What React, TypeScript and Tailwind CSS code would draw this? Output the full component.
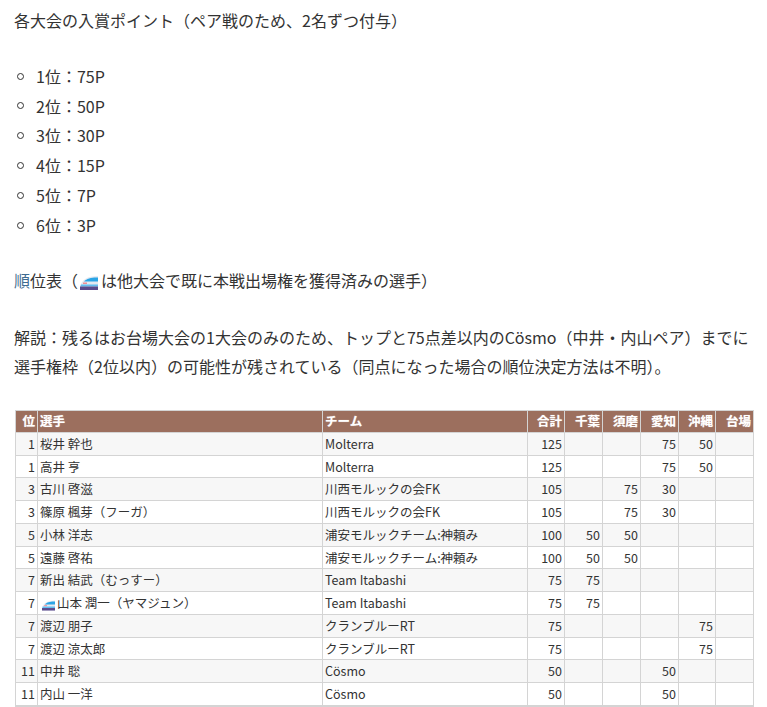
import React from 'react';

const Train = ({ className }: { className: string }) => (
  <svg viewBox="0 0 18 14" className={className}>
    <path d="M0 10 C2 4 7 0 18 0 V11 H0 Z" fill="#e4e9f1" />
    <path d="M5 4.5 C8 2 13 1.5 18 1.5 V5.5 H4 Z" fill="#2aa5e6" />
    <path d="M1 8.5 H18 V10.5 H0.5 Z" fill="#62bdf0" />
    <path d="M3 6.5 H7 V8 H3 Z" fill="#ee8f96" />
    <path d="M0 10.5 H18 V14 H0 Z" fill="#5a4a8c" />
  </svg>
);

const points = ['1位：75P', '2位：50P', '3位：30P', '4位：15P', '5位：7P', '6位：3P'];

const heads = ['合計', '千葉', '須磨', '愛知', '沖縄', '台場'];

const rows: { rank: string; name: string; train?: boolean; team: string; pts: string[] }[] = [
  { rank: '1', name: '桜井 幹也', team: 'Molterra', pts: ['125', '', '', '75', '50', ''] },
  { rank: '1', name: '高井 亨', team: 'Molterra', pts: ['125', '', '', '75', '50', ''] },
  { rank: '3', name: '古川 啓滋', team: '川西モルックの会FK', pts: ['105', '', '75', '30', '', ''] },
  { rank: '3', name: '篠原 楓芽（フーガ）', team: '川西モルックの会FK', pts: ['105', '', '75', '30', '', ''] },
  { rank: '5', name: '小林 洋志', team: '浦安モルックチーム:神頼み', pts: ['100', '50', '50', '', '', ''] },
  { rank: '5', name: '遠藤 啓祐', team: '浦安モルックチーム:神頼み', pts: ['100', '50', '50', '', '', ''] },
  { rank: '7', name: '新出 結武（むっすー）', team: 'Team Itabashi', pts: ['75', '75', '', '', '', ''] },
  { rank: '7', name: '山本 潤一（ヤマジュン）', train: true, team: 'Team Itabashi', pts: ['75', '75', '', '', '', ''] },
  { rank: '7', name: '渡辺 朋子', team: 'クランブルーRT', pts: ['75', '', '', '', '75', ''] },
  { rank: '7', name: '渡辺 涼太郎', team: 'クランブルーRT', pts: ['75', '', '', '', '75', ''] },
  { rank: '11', name: '中井 聡', team: 'Cösmo', pts: ['50', '', '', '50', '', ''] },
  { rank: '11', name: '内山 一洋', team: 'Cösmo', pts: ['50', '', '', '50', '', ''] },
  { rank: '', name: '', team: '', pts: ['', '', '', '', '', ''] },
];

export default function App() {
  return (
    <div className="h-[707px] overflow-hidden bg-white pl-[14px] pt-[6px] font-['Noto_Sans_CJK_JP',sans-serif] text-base leading-[28.8px] text-[#333]">
      <p>各大会の入賞ポイント（ペア戦のため、2名ずつ付与）</p>
      <ul className="mt-[27px] list-none">
        {points.map((p) => (
          <li key={p} className="mb-[1px] flex items-center">
            <span className="ml-[3px] mr-[12px] h-[7px] w-[7px] rounded-full border-[1.5px] border-[#333]" />
            {p}
          </li>
        ))}
      </ul>
      <p className="mt-[26px]">
        <span className="text-[#3f6c91]">順</span>位表（
        <Train className="mb-[-1px] ml-[2px] mr-[2px] inline h-[14px] w-[18px]" />
        <span className="ml-px">は他大会で既に本戦出場権を獲得済みの選手）</span>
      </p>
      <p className="mt-[29px] w-[738px]">
        解説：残るはお台場大会の1大会のみのため、トップと75点差以内のCösmo（中井・内山ペア）までに選手権枠（2位以内）の可能性が残されている（同点になった場合の順位決定方法は不明）。
      </p>
      <table className="ml-px mt-[29.5px] w-[739px] table-fixed border-collapse text-[12.5px] leading-[21.76px]">
        <colgroup>
          <col className="w-[22px]" />
          <col className="w-[285px]" />
          <col className="w-[205px]" />
          <col className="w-[37px]" />
          <col className="w-[38px]" />
          <col className="w-[38px]" />
          <col className="w-[38px]" />
          <col className="w-[37px]" />
          <col className="w-[38px]" />
        </colgroup>
        <thead>
          <tr className="bg-[#9c6f5e] font-bold leading-[20.26px] text-white [text-shadow:0_0_1px_rgba(255,255,255,0.6)]">
            <th className="border border-[#d4d4d4] px-[2px] text-right">位</th>
            <th className="border border-[#d4d4d4] px-[2px] text-left">選手</th>
            <th className="border border-[#d4d4d4] px-[2px] text-left">チーム</th>
            {heads.map((h) => (
              <th key={h} className="border border-[#d4d4d4] px-[2px] text-right">{h}</th>
            ))}
          </tr>
        </thead>
        <tbody>
          {rows.map((r, i) => (
            <tr key={i} className={i % 2 === 0 ? 'bg-[#f7f7f7]' : 'bg-white'}>
              <td className="border border-[#d4d4d4] px-[2px] text-right">{r.rank}</td>
              <td className="border border-[#d4d4d4] px-[2px]">
                {r.train && <Train className="mb-[-1px] ml-[2px] mr-[2px] inline h-[11px] w-[13px]" />}
                {r.name}
              </td>
              <td className="border border-[#d4d4d4] px-[2px]">{r.team}</td>
              {r.pts.map((p, j) => (
                <td key={j} className="border border-[#d4d4d4] px-[2px] text-right">{p}</td>
              ))}
            </tr>
          ))}
        </tbody>
      </table>
    </div>
  );
}
